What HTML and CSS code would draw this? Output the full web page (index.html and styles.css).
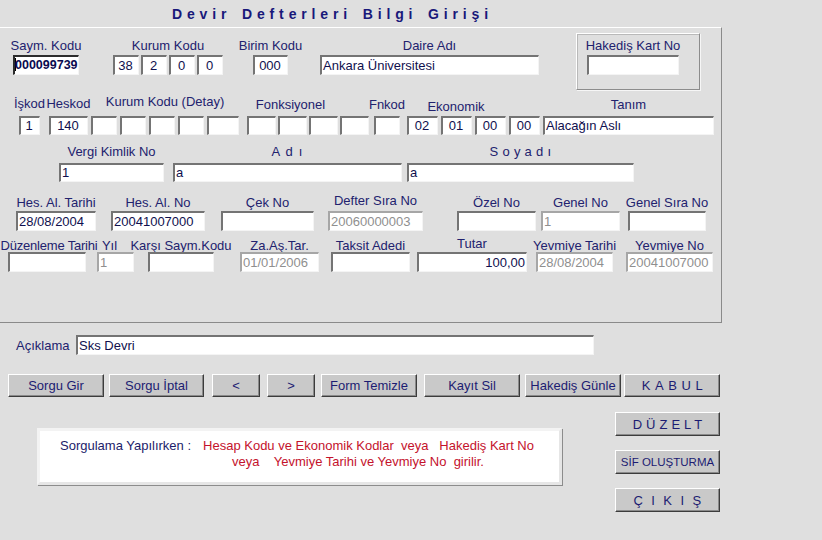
FILE: index.html
```html
<!DOCTYPE html>
<html lang="tr">
<head>
<meta charset="utf-8">
<title>Devir Defterleri Bilgi Girişi</title>
<link rel="stylesheet" href="styles.css">
</head>
<body>
<div class="app">
  <h1 class="title">Devir Defterleri Bilgi Girişi</h1>

  <div class="panel">
    <div class="row r1">
      <div class="field f-saym"><span class="lbl">Saym. Kodu</span><div class="inp focus"><span class="caret"></span>000099739</div></div>
      <div class="field f-kurum"><span class="lbl">Kurum Kodu</span>
        <div class="boxes g2"><div class="inp c bw26">38</div><div class="inp c bw26">2</div><div class="inp c bw26">0</div><div class="inp c bw26">0</div></div>
      </div>
      <div class="field f-birim"><span class="lbl">Birim Kodu</span><div class="inp c">000</div></div>
      <div class="field f-daire"><span class="lbl">Daire Adı</span><div class="inp">Ankara Üniversitesi</div></div>
      <div class="group f-hak"><span class="lbl">Hakediş Kart No</span><div class="inp"></div></div>
    </div>

    <div class="row r2">
      <div class="field f-iskod"><span class="lbl">İşkod</span><div class="inp c">1</div></div>
      <div class="field f-heskod"><span class="lbl">Heskod</span><div class="inp c">140</div></div>
      <div class="field f-kdet"><span class="lbl high">Kurum Kodu (Detay)</span>
        <div class="boxes g3"><div class="inp bw26"></div><div class="inp bw26"></div><div class="inp bw26"></div><div class="inp bw26"></div><div class="inp bw32"></div></div>
      </div>
      <div class="field f-fonk"><span class="lbl mid shift-l">Fonksiyonel</span>
        <div class="boxes g2"><div class="inp bw29"></div><div class="inp bw29"></div><div class="inp bw29"></div><div class="inp bw29"></div></div>
      </div>
      <div class="field f-fnkod"><span class="lbl mid">Fnkod</span><div class="inp"></div></div>
      <div class="field f-eko"><span class="lbl low shift-l">Ekonomik</span>
        <div class="boxes g3"><div class="inp c bw31">02</div><div class="inp c bw31">01</div><div class="inp c bw31">00</div><div class="inp c bw31">00</div></div>
      </div>
      <div class="field f-tanim"><span class="lbl mid">Tanım</span><div class="inp">Alacağın Aslı</div></div>
    </div>

    <div class="row r3">
      <div class="field f-vergi"><span class="lbl">Vergi Kimlik No</span><div class="inp">1</div></div>
      <div class="field f-adi"><span class="lbl sp-adi">A d ı</span><div class="inp">a</div></div>
      <div class="field f-soyadi"><span class="lbl sp-soyadi">S o y a d ı</span><div class="inp">a</div></div>
    </div>

    <div class="row r4">
      <div class="field f-hat"><span class="lbl">Hes. Al. Tarihi</span><div class="inp">28/08/2004</div></div>
      <div class="field f-han"><span class="lbl">Hes. Al. No</span><div class="inp">20041007000</div></div>
      <div class="field f-cek"><span class="lbl">Çek No</span><div class="inp"></div></div>
      <div class="field f-defter"><span class="lbl high">Defter Sıra No</span><div class="inp dis">20060000003</div></div>
      <div class="field f-ozel"><span class="lbl">Özel No</span><div class="inp"></div></div>
      <div class="field f-genel"><span class="lbl">Genel No</span><div class="inp dis">1</div></div>
      <div class="field f-gsira"><span class="lbl">Genel Sıra No</span><div class="inp"></div></div>
    </div>

    <div class="row r5">
      <div class="field f-duz"><span class="lbl shift-duz">Düzenleme Tarihi</span><div class="inp"></div></div>
      <div class="field f-yil"><span class="lbl shift-yil">Yıl</span><div class="inp dis">1</div></div>
      <div class="field f-karsi"><span class="lbl">Karşı Saym.Kodu</span><div class="inp"></div></div>
      <div class="field f-zaas"><span class="lbl">Za.Aş.Tar.</span><div class="inp dis">01/01/2006</div></div>
      <div class="field f-taksit"><span class="lbl">Taksit Adedi</span><div class="inp"></div></div>
      <div class="field f-tutar"><span class="lbl high">Tutar</span><div class="inp r">100,00</div></div>
      <div class="field f-ytar"><span class="lbl">Yevmiye Tarihi</span><div class="inp dis">28/08/2004</div></div>
      <div class="field f-yno"><span class="lbl">Yevmiye No</span><div class="inp dis">20041007000</div></div>
    </div>
  </div>

  <div class="aciklama">
    <span class="a-lbl">Açıklama</span>
    <div class="inp a-inp">Sks Devri</div>
  </div>

  <div class="btnrow">
    <button class="btn b-sgir">Sorgu Gir</button>
    <button class="btn b-siptal">Sorgu İptal</button>
    <button class="btn b-prev">&lt;</button>
    <button class="btn b-next">&gt;</button>
    <button class="btn b-form">Form Temizle</button>
    <button class="btn b-kayit">Kayıt Sil</button>
    <button class="btn b-hak">Hakediş Günle</button>
    <button class="btn b-kabul">KABUL</button>
  </div>

  <div class="bottom">
    <div class="info">
      <span class="info-lbl">Sorgulama Yapılırken :</span>
      <div class="info-red">
        <span class="red-l1">Hesap Kodu ve Ekonomik Kodlar  veya   Hakediş Kart No</span>
        <span class="red-l2">veya    Yevmiye Tarihi ve Yevmiye No  girilir.</span>
      </div>
    </div>
    <div class="side">
      <button class="btn sbtn s-duzelt">DÜZELT</button>
      <button class="btn sbtn s-sif">SİF OLUŞTURMA</button>
      <button class="btn sbtn s-cikis">ÇIKIŞ</button>
    </div>
  </div>
</div>
</body>
</html>
```

FILE: styles.css
```css
* { box-sizing: border-box; margin: 0; padding: 0; }

html, body { width: 822px; height: 540px; overflow: hidden; }

body {
  background: #dfdfdf;
  font-family: "Liberation Sans", Arial, sans-serif;
  font-size: 13px;
  color: #22226e;
}

.title {
  height: 27px;
  padding-left: 172px;
  font-size: 14px;
  font-weight: bold;
  line-height: 29px;
  letter-spacing: 4.85px;
  word-spacing: 2px;
  color: #18187a;
  white-space: nowrap;
}

/* main framed panel */
.panel {
  width: 722px;
  height: 296px;
  border-top: 1px solid #ffffff;
  border-right: 1px solid #8a8a8a;
  border-bottom: 1px solid #8a8a8a;
}

.row { display: flex; align-items: flex-start; }
.r1 { margin-top: 10px; }
.r2 { margin-top: 21px; }
.r3 { margin-top: 9px; }
.r4 { margin-top: 13px; }
.r5 { margin-top: 7px; }

.field { display: flex; flex-direction: column; align-items: center; flex: none; }

.lbl {
  display: block;
  height: 15px;
  line-height: 15px;
  white-space: nowrap;
}
.r1 .lbl { margin-bottom: 2px; }
.r2 .lbl { margin-bottom: 5px; }
.r3 .lbl { margin-bottom: 4px; }
.r4 .lbl { margin-bottom: 1px; }
.r5 .lbl { margin-bottom: -1px; }

.r2 .lbl.high { margin-top: -2px; margin-bottom: 7px; }
.r2 .lbl.mid { padding-top: 1px; height: 16px; margin-bottom: 4px; }
.r2 .lbl.low { padding-top: 3px; height: 18px; margin-bottom: 2px; }
.r4 .lbl.high { margin-top: -2px; margin-bottom: 3px; }
.r5 .lbl.high { margin-top: -2px; margin-bottom: 1px; }

.shift-l { margin-right: 35px; }
.shift-yil { margin-right: 12px; }
.shift-duz { margin-left: 4px; letter-spacing: -0.2px; }
.sp-adi { letter-spacing: 1.2px; }
.sp-soyadi { letter-spacing: 0.3px; }

/* input-like boxes */
.inp {
  height: 20px;
  width: 100%;
  background: #ffffff;
  border-top: 2px solid #747474;
  border-left: 2px solid #747474;
  border-right: 1px solid #f4f4f4;
  border-bottom: 1px solid #f4f4f4;
  padding-left: 1px;
  line-height: 17px;
  color: #10104e;
  white-space: nowrap;
  overflow: hidden;
}
.r2 .inp, .r3 .inp { height: 19px; line-height: 16px; }
.inp.c { text-align: center; padding-left: 0; padding-right: 2px; }
.inp.r { text-align: right; padding-right: 1px; }
.inp.dis {
  color: #8f8f8f;
  border-top-color: #a6a6a6;
  border-left-color: #a6a6a6;
}
.inp.focus {
  border-top-color: #2c2c2c;
  border-left-color: #2c2c2c;
  font-weight: bold;
  font-size: 12.5px;
  color: #0a0a50;
  padding-left: 0;
}
.caret {
  display: inline-block;
  width: 1px;
  height: 13px;
  background: #000;
  vertical-align: -2px;
  margin-right: -1px;
}

.boxes { display: flex; }
.boxes.g2 { gap: 2px; }
.boxes.g3 { gap: 3px; }
.bw26 { width: 26px; }
.bw29 { width: 29px; }
.bw31 { width: 31px; }
.bw32 { width: 32px; }

/* row 1 */
.f-saym  { margin-left: 13px; width: 66px; }
.f-kurum { margin-left: 34px; width: 110px; }
.f-birim { margin-left: 30px; width: 35px; }
.f-daire { margin-left: 32px; width: 219px; }

.group {
  flex: none;
  margin-left: 37px;
  width: 124px;
  margin-top: -5px;
  margin-bottom: -15px;
  padding: 4px 20px 14px 10px;
  border-top: 1px solid #ffffff;
  border-left: 1px solid #ffffff;
  border-right: 1px solid #8c8c8c;
  border-bottom: 1px solid #8c8c8c;
  box-shadow: 1px 1px 0 #f6f6f6, inset 1px 1px 0 #b9b9b9;
  display: flex;
  flex-direction: column;
  align-items: center;
}

/* row 2 */
.f-iskod  { margin-left: 19px; width: 21px; }
.f-heskod { margin-left: 9px;  width: 39px; }
.f-kdet   { margin-left: 3px;  width: 148px; }
.f-fonk   { margin-left: 8px;  width: 122px; }
.f-fnkod  { margin-left: 5px;  width: 26px; }
.f-eko    { margin-left: 7px;  width: 133px; }
.f-tanim  { margin-left: 3px;  width: 171px; }

/* row 3 */
.f-vergi  { margin-left: 59px; width: 105px; }
.f-adi    { margin-left: 9px;  width: 229px; }
.f-soyadi { margin-left: 5px;  width: 227px; }

/* row 4 */
.f-hat    { margin-left: 16px; width: 80px; }
.f-han    { margin-left: 15px; width: 94px; }
.f-cek    { margin-left: 16px; width: 93px; }
.f-defter { margin-left: 14px; width: 95px; }
.f-ozel   { margin-left: 34px; width: 79px; }
.f-genel  { margin-left: 5px;  width: 79px; }
.f-gsira  { margin-left: 8px;  width: 78px; }

/* row 5 */
.f-duz    { margin-left: 8px;  width: 78px; }
.f-yil    { margin-left: 11px; width: 37px; }
.f-karsi  { margin-left: 14px; width: 66px; }
.f-zaas   { margin-left: 26px; width: 79px; }
.f-taksit { margin-left: 12px; width: 79px; }
.f-tutar  { margin-left: 7px;  width: 110px; }
.f-ytar   { margin-left: 9px;  width: 77px; }
.f-yno    { margin-left: 13px; width: 87px; }

/* Açıklama */
.aciklama {
  display: flex;
  align-items: center;
  margin-top: 12px;
  padding-left: 16px;
}
.a-lbl { width: 60px; white-space: nowrap; }
.inp.a-inp { width: 518px; padding-left: 1px; }

/* buttons */
.btn {
  display: block;
  flex: none;
  height: 23px;
  background: #c9c9c9;
  border-top: 1px solid #ffffff;
  border-left: 1px solid #ffffff;
  border-right: 1px solid #3c3c3c;
  border-bottom: 1px solid #3c3c3c;
  box-shadow: inset -1px -1px 0 #8a8a8a;
  font-family: "Liberation Sans", Arial, sans-serif;
  font-size: 13px;
  color: #1c1c72;
  line-height: 20px;
  text-align: center;
  white-space: nowrap;
}

.btnrow { display: flex; margin-top: 19px; }
.b-sgir   { margin-left: 8px;  width: 96px; }
.b-siptal { margin-left: 5px;  width: 95px; }
.b-prev   { margin-left: 8px;  width: 48px; }
.b-next   { margin-left: 7px;  width: 48px; }
.b-form   { margin-left: 6px;  width: 96px; }
.b-kayit  { margin-left: 7px;  width: 96px; }
.b-hak    { margin-left: 5px;  width: 96px; }
.b-kabul  { margin-left: 3px;  width: 96px; letter-spacing: 4.6px; padding-left: 5px; }

/* bottom area */
.bottom { display: flex; align-items: flex-start; }

.info {
  flex: none;
  display: flex;
  align-items: flex-start;
  margin-top: 31px;
  margin-left: 37px;
  width: 525px;
  height: 57px;
  background: #ffffff;
  border-top: 3px solid #f3f3f3;
  border-left: 3px solid #f3f3f3;
  border-right: 3px solid #e6e6e6;
  border-bottom: 3px solid #e6e6e6;
  box-shadow: 1px 1px 0 #8c8c8c;
  padding: 7px 0 0 20px;
  line-height: 16px;
}
.info-lbl { color: #1c1c6a; white-space: nowrap; }
.info-red {
  display: flex;
  flex-direction: column;
  margin-left: 12px;
  color: #c4122c;
  white-space: pre;
}
.red-l2 { margin-left: 29px; }

.side {
  flex: none;
  display: flex;
  flex-direction: column;
  gap: 14px;
  margin-top: 15px;
  margin-left: 53px;
}
.sbtn { width: 105px; height: 24px; line-height: 21px; }
.s-duzelt { letter-spacing: 4px; padding-left: 4px; }
.s-sif { font-size: 11.5px; letter-spacing: 0; }
.s-cikis { letter-spacing: 8.4px; padding-left: 8px; }
```
